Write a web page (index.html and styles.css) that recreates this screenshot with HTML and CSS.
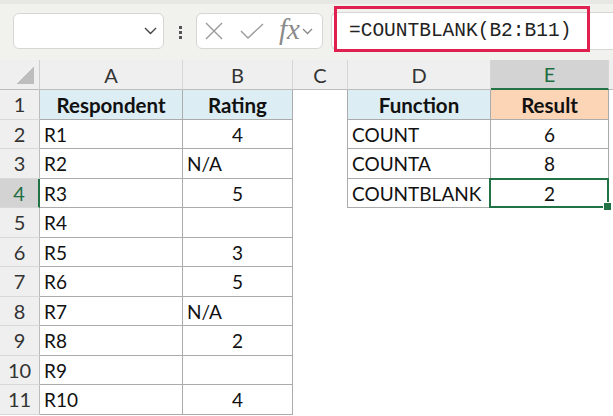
FILE: index.html
```html
<!DOCTYPE html>
<html lang="en">

<head>
  <meta charset="UTF-8">
  <title>COUNTBLANK</title>
  <link rel="stylesheet" href="styles.css">
</head>

<body>
  <div class="ribbon">
    <div class="namebox">
      <svg width="13" height="8" viewBox="0 0 13 8"><path d="M1 1l5.5 5.5L12 1" fill="none" stroke="#444" stroke-width="1.4"/></svg>
    </div>
    <div class="grip"><i></i><i></i><i></i></div>
    <div class="fnbox">
      <svg class="ico-x" width="18" height="18" viewBox="0 0 18 18"><path d="M1 1l16 16M17 1L1 17" stroke="#9a9a9a" stroke-width="1.4"/></svg>
      <svg class="ico-ok" width="24" height="16" viewBox="0 0 24 16"><path d="M1 8l7 7L23 1" fill="none" stroke="#9a9a9a" stroke-width="1.4"/></svg>
      <span class="fx">fx</span>
      <svg class="ico-dd" width="11" height="7" viewBox="0 0 11 7"><path d="M1 1l4.5 4.5L10 1" fill="none" stroke="#888" stroke-width="1.3"/></svg>
    </div>
    <div class="formula">
      <span>=COUNTBLANK(B2:B11)</span>
      <div class="mark"></div>
    </div>
  </div>

  <div class="sheet">
    <div class="corner"></div>
    <div class="ch">A</div>
    <div class="ch">B</div>
    <div class="ch">C</div>
    <div class="ch">D</div>
    <div class="ch on">E</div>
    <div class="ch end"></div>

    <div class="rh">1</div>
    <div class="c t head mid">Respondent</div>
    <div class="c t head mid">Rating</div>
    <div class="c edge"></div>
    <div class="c t head mid">Function</div>
    <div class="c t res mid">Result</div>
    <div class="c"></div>

    <div class="rh">2</div>
    <div class="c t">R1</div>
    <div class="c t mid">4</div>
    <div class="c edge"></div>
    <div class="c t">COUNT</div>
    <div class="c t mid">6</div>
    <div class="c"></div>

    <div class="rh">3</div>
    <div class="c t">R2</div>
    <div class="c t">N/A</div>
    <div class="c edge"></div>
    <div class="c t">COUNTA</div>
    <div class="c t mid">8</div>
    <div class="c"></div>

    <div class="rh on">4</div>
    <div class="c t">R3</div>
    <div class="c t mid">5</div>
    <div class="c edge"></div>
    <div class="c t">COUNTBLANK</div>
    <div class="c t mid active">2</div>
    <div class="c"></div>

    <div class="rh">5</div>
    <div class="c t">R4</div>
    <div class="c t mid"></div>
    <div class="c"></div>
    <div class="c"></div>
    <div class="c"></div>
    <div class="c"></div>

    <div class="rh">6</div>
    <div class="c t">R5</div>
    <div class="c t mid">3</div>
    <div class="c"></div>
    <div class="c"></div>
    <div class="c"></div>
    <div class="c"></div>

    <div class="rh">7</div>
    <div class="c t">R6</div>
    <div class="c t mid">5</div>
    <div class="c"></div>
    <div class="c"></div>
    <div class="c"></div>
    <div class="c"></div>

    <div class="rh">8</div>
    <div class="c t">R7</div>
    <div class="c t">N/A</div>
    <div class="c"></div>
    <div class="c"></div>
    <div class="c"></div>
    <div class="c"></div>

    <div class="rh">9</div>
    <div class="c t">R8</div>
    <div class="c t mid">2</div>
    <div class="c"></div>
    <div class="c"></div>
    <div class="c"></div>
    <div class="c"></div>

    <div class="rh">10</div>
    <div class="c t">R9</div>
    <div class="c t mid"></div>
    <div class="c"></div>
    <div class="c"></div>
    <div class="c"></div>
    <div class="c"></div>

    <div class="rh">11</div>
    <div class="c t">R10</div>
    <div class="c t mid">4</div>
    <div class="c"></div>
    <div class="c"></div>
    <div class="c"></div>
    <div class="c"></div>
  </div>
</body>

</html>
```

FILE: styles.css
```css
* {
  box-sizing: border-box;
}

body {
  margin: 0;
  width: 613px;
  height: 416px;
  overflow: hidden;
  background: #fff;
  color: #111;
  font-family: Lato, "Open Sans", sans-serif;
}

/* formula bar strip */
.ribbon {
  display: flex;
  align-items: flex-start;
  height: 60px;
  padding: 13px 0 0 13px;
  background: #f1f1ee;
  box-shadow: inset 0 4px #e7e7e3;
}

.namebox,
.fnbox {
  height: 36px;
  background: #fff;
  border: 1px solid #d6d6d2;
  border-radius: 6px;
  display: flex;
  align-items: center;
}

.namebox {
  width: 151px;
  justify-content: flex-end;
  padding-right: 6px;
}

.grip {
  width: 32px;
  display: flex;
  flex-direction: column;
  align-items: center;
  gap: 2px;
  padding-top: 13px;
}

.grip i {
  width: 3px;
  height: 3px;
  background: #555;
}

.fnbox {
  width: 127px;
  padding-left: 8px;
}

.ico-x {
  margin-right: 17px;
}

.ico-ok {
  margin-right: 15px;
}

.fx {
  font-family: "Liberation Serif", serif;
  font-style: italic;
  font-size: 29px;
  line-height: 1;
  color: #8a8a8a;
  margin: -3px 2px 0 0;
}

.formula {
  position: relative;
  flex: 1;
  height: 38px;
  margin: -1px 0 0 8px;
  padding-left: 17px;
  background: #fff;
  border: 1px solid #d6d6d2;
  border-right: 0;
  border-radius: 6px 0 0 6px;
  display: flex;
  align-items: center;
  font-family: "Liberation Mono", monospace;
  font-size: 19.5px;
  color: #222;
}

.formula .mark {
  position: absolute;
  left: 2px;
  top: -7px;
  width: 256px;
  height: 46px;
  border: 3px solid #e0214f;
}

/* grid */
.sheet {
  display: grid;
  grid-template-columns: 40px 143px 110px 55px 143px 118px 1fr;
  grid-template-rows: 30px repeat(11, 29.5px);
  font-size: 19px;
}

.corner,
.ch,
.rh {
  background: #efefef;
  color: #333;
  font-size: 20px;
  display: flex;
  align-items: center;
  justify-content: center;
}

.corner {
  border-right: 1px solid #cfcfcf;
  border-bottom: 1px solid #bcbcbc;
  background: #efefef linear-gradient(to bottom right, transparent 50%, #bdbdbd 50%) no-repeat right 5px bottom 5px / 18px 18px;
}

.ch {
  border-right: 1px solid #d6d6d6;
  border-bottom: 1px solid #bcbcbc;
}

.ch.end {
  border-right: 0;
}

.ch.on {
  background: #d3d3d3;
  color: #1e6e41;
  border-bottom: 2px solid #217346;
}

.rh {
  border-right: 1px solid #bcbcbc;
  border-bottom: 1px solid #d8d8d8;
}

.rh.on {
  background: #d3d3d3;
  color: #1e6e41;
  border-right: 2px solid #217346;
}

.c {
  display: flex;
  align-items: center;
  padding: 1px 4px 0;
  white-space: nowrap;
}

.c.t {
  border-right: 1px solid #ababab;
  border-bottom: 1px solid #ababab;
}

.c.edge {
  border-right: 1px solid #ababab;
}

.c.mid {
  justify-content: center;
}

.head,
.res {
  font-weight: bold;
  font-size: 20.5px;
}

.head {
  background: #dcedf3;
}

.res {
  background: #fbd5b5;
}

.active {
  position: relative;
}

.active::before {
  content: "";
  position: absolute;
  left: -2px;
  right: -1px;
  top: -1px;
  bottom: -1px;
  border: 2px solid #217346;
}

.active::after {
  content: "";
  position: absolute;
  right: -4px;
  bottom: -4px;
  width: 7px;
  height: 7px;
  background: #217346;
  border: 1px solid #fff;
}
```
